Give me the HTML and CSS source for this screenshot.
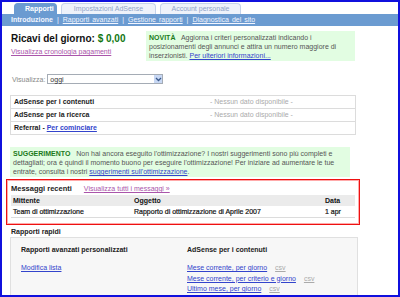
FILE: index.html
```html
<html lang="it">
<head>
    <meta charset="UTF-8">
    <title>AdSense - Rapporti</title>
    <link rel="stylesheet" href="styles.css">
</head>
<body>
    <div class="frame">
        <div class="tabs">
            <div class="tab active">Rapporti</div>
            <div class="tab">Impostazioni AdSense</div>
            <div class="tab">Account personale</div>
        </div>
        <div class="subnav">
            <b>Introduzione</b> <span class="sep">|</span>
            <a href="#">Rapporti avanzati</a> <span class="sep">|</span>
            <a href="#">Gestione rapporti</a> <span class="sep">|</span>
            <a href="#">Diagnostica del sito</a>
        </div>

        <div class="content">
            <div class="top">
                <div class="earnings">
                    <h1>Ricavi del giorno: <span class="money">$ 0,00</span></h1>
                    <a href="#" class="visited">Visualizza cronologia pagamenti</a>
                </div>
                <div class="notice news">
                    <b>NOVITÀ</b>&nbsp;&nbsp; Aggiorna i criteri personalizzati indicando i<br>
                    posizionamenti degli annunci e attira un numero maggiore di<br>
                    inserzionisti. <a href="#">Per ulteriori informazioni...</a>
                </div>
            </div>

            <div class="period">
                <span class="label">Visualizza:</span>
                <div class="select">
                    <span>oggi</span>
                    <span class="arrow">
                        <svg width="7" height="5" viewBox="0 0 7 5"><path d="M1 1 L3.5 3.5 L6 1" fill="none" stroke="#3b5a8c" stroke-width="1.3"/></svg>
                    </span>
                </div>
            </div>

            <div class="summary">
                <div class="row">
                    <b>AdSense per i contenuti</b>
                    <span class="empty">- Nessun dato disponibile -</span>
                </div>
                <div class="row">
                    <b>AdSense per la ricerca</b>
                    <span class="empty">- Nessun dato disponibile -</span>
                </div>
                <div class="row">
                    <b>Referral - <a href="#">Per cominciare</a></b>
                </div>
            </div>

            <div class="notice tip">
                <b>SUGGERIMENTO</b>&nbsp;&nbsp; Non hai ancora eseguito l'ottimizzazione? I nostri suggerimenti sono più completi e<br>
                dettagliati; ora è quindi il momento buono per eseguire l'ottimizzazione! Per iniziare ad aumentare le tue<br>
                entrate, consulta i nostri <a href="#">suggerimenti sull'ottimizzazione</a>.
            </div>
        </div>

        <div class="messages">
            <div class="msg-title">
                <b>Messaggi recenti</b>
                <a href="#" class="visited">Visualizza tutti i messaggi »</a>
            </div>
            <div class="msg-row head">
                <span class="c-from">Mittente</span>
                <span class="c-subj">Oggetto</span>
                <span class="c-date">Data</span>
            </div>
            <div class="msg-row unread">
                <span class="c-from">Team di ottimizzazione</span>
                <span class="c-subj">Rapporto di ottimizzazione di Aprile 2007</span>
                <span class="c-date">1 apr</span>
            </div>
        </div>

        <div class="content">
            <div class="quick-title">Rapporti rapidi</div>
            <div class="quick">
                <div class="quick-col left">
                    <b>Rapporti avanzati personalizzati</b>
                    <a href="#">Modifica lista</a>
                </div>
                <div class="quick-col">
                    <b>AdSense per i contenuti</b>
                    <div class="report"><a href="#">Mese corrente, per giorno</a> <span class="csv">csv</span></div>
                    <div class="report"><a href="#">Mese corrente, per criterio e giorno</a> <span class="csv">csv</span></div>
                    <div class="report"><a href="#">Ultimo mese, per giorno</a> <span class="csv">csv</span></div>
                </div>
            </div>
        </div>
    </div>
</body>
</html>
```

FILE: styles.css
```css
body {
  margin: 0;
  font-family: "Liberation Sans", Arial, sans-serif;
  font-size: 7px;
  color: #333;
  background-color: white;
}

a {
  color: #3344cc;
  text-decoration: underline;
}

a.visited {
  color: #aa55aa;
}

b {
  color: #222;
}

.frame {
  box-sizing: border-box;
  width: 400px;
  height: 297px;
  border: 2px solid #1010dd;
  overflow: hidden;
}

.tabs {
  display: flex;
  gap: 4px;
  padding: 1px 0px 0px 12px;
}

.tab {
  height: 10px;
  line-height: 10px;
  padding: 0px 10px;
  border: 1px solid #c5d3ea;
  border-bottom: none;
  border-radius: 4px 4px 0px 0px;
  background-color: #eef2fa;
  color: #8ea4c8;
  text-align: center;
}

.tab:nth-child(2) {
  width: 73px;
}

.tab:nth-child(3) {
  width: 59px;
}

.tab.active {
  width: 21px;
  border-color: #6b9bd1;
  background-color: #6b9bd1;
  color: white;
  font-weight: 700;
}

.subnav {
  height: 12px;
  line-height: 12px;
  padding-left: 9px;
  background-color: #6b9bd1;
  color: #f2f5ff;
  word-spacing: 1px;
}

.subnav b {
  color: #f2f5ff;
}

.subnav a {
  color: #f2f5ff;
}

.subnav .sep {
  padding: 0px 1px;
}

.content {
  padding: 0px 8px;
}

.top {
  display: flex;
  justify-content: space-between;
  padding-top: 5px;
  width: 345px;
}

.earnings h1 {
  margin: 2px 0px 4px 1px;
  font-size: 10px;
  font-weight: 700;
  color: #111;
}

.money {
  color: #117711;
}

.earnings a {
  margin-left: 1px;
}

.notice {
  box-sizing: border-box;
  background-color: #e2fde2;
  line-height: 9px;
  color: #555;
}

.notice b {
  color: #1a7a1a;
}

.news {
  width: 209px;
  height: 30px;
  padding: 2px 3px;
}

.period {
  display: flex;
  align-items: center;
  gap: 2px;
  margin-top: 13px;
  padding-left: 2px;
  color: #888;
}

.select {
  box-sizing: border-box;
  display: flex;
  justify-content: space-between;
  align-items: center;
  width: 116px;
  height: 10px;
  padding-left: 2px;
  border: 1px solid #a5acb5;
  color: #333;
}

.arrow {
  display: flex;
  align-items: center;
  justify-content: center;
  width: 8px;
  height: 8px;
  background-color: #c8d8f4;
}

.summary {
  width: 344px;
  margin-top: 11px;
  border: 1px solid #dcdcdc;
}

.row {
  display: flex;
  height: 12px;
  line-height: 12px;
  padding-left: 3px;
  border-top: 1px solid #dcdcdc;
}

.row:first-child {
  border-top: none;
}

.row b {
  width: 196px;
}

.empty {
  color: #aaa;
}

.tip {
  width: 340px;
  height: 30px;
  margin-top: 12px;
  padding: 2px 3px;
}

.messages {
  box-sizing: border-box;
  width: 354px;
  height: 46px;
  margin: 2px 0px 0px 4px;
  padding: 4px 4px 0px 4px;
  border: 1px solid #ee1111;
  box-shadow: inset 0px 0px 0px 1px #ffaaaa;
}

.msg-title {
  display: flex;
  gap: 12px;
  height: 10px;
  line-height: 10px;
}

.msg-title b {
  font-size: 7.5px;
}

.msg-row {
  display: flex;
  height: 11px;
  line-height: 11px;
  padding-left: 2px;
  border-bottom: 1px solid #dcdcdc;
  color: #111;
}

.msg-row.head {
  margin-top: 1px;
  background-color: #ebebeb;
  border-bottom: none;
  font-weight: 700;
}

.msg-row.unread {
  -webkit-text-stroke: 0.2px #111;
}

.c-from {
  width: 121px;
}

.c-subj {
  width: 191px;
}

.quick-title {
  margin-top: 2px;
  height: 9px;
  line-height: 9px;
  padding-left: 1px;
  font-weight: 700;
  color: #222;
}

.quick {
  display: flex;
  width: 346px;
  height: 70px;
  margin-top: 1px;
  border: 1px solid #e0e0e0;
  border-bottom: none;
  background-color: #f7f7f7;
}

.quick-col {
  display: flex;
  flex-direction: column;
  padding-top: 7px;
  line-height: 10px;
}

.quick-col.left {
  width: 166px;
  padding-left: 10px;
}

.quick-col b {
  margin-bottom: 8px;
}

.report {
  height: 10.5px;
}

.csv {
  margin-left: 6px;
  color: #aaa;
  text-decoration: underline;
}
```
